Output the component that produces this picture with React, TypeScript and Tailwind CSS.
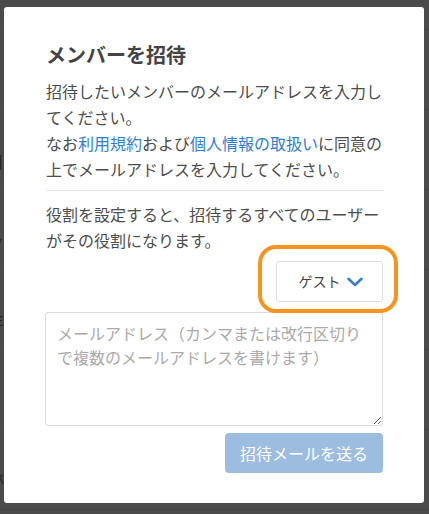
const rows = [
  { h: 'h-[30px]', text: '' },
  { h: 'h-[80px]', text: '' },
  { h: 'h-[80px]', text: '月' },
  { h: 'h-[80px]', text: '々' },
  { h: 'h-[80px]', text: '年' },
  { h: 'h-[80px]', text: '' },
  { h: 'h-[80px]', text: 'が' },
];

const InviteDialog = () => {
  return (
    <div className="absolute left-[4px] top-[7px] w-[420px] rounded-[3px] bg-white pl-[42px] pr-[40px] pt-[34px] pb-[30px]">
      <h2 className="text-[20px] font-bold leading-[28px] text-[#444]">メンバーを招待</h2>

      <p className="mt-[9px] text-[16px] leading-[26px] text-[#4d4d4d]">
        招待したいメンバーのメールアドレスを入力してください。
        <br />
        なお<a className="text-[#2f80d0]">利用規約</a>および
        <a className="text-[#2f80d0]">個人情報の取扱い</a>に同意の上でメールアドレスを入力してください。
      </p>

      <div className="mt-[8px] mr-[1px] border-t border-[#e3e3e3]" />

      <p className="mt-[10px] text-[16px] leading-[26px] text-[#4d4d4d]">
        役割を設定すると、招待するすべてのユーザーがその役割になります。
      </p>

      <div className="mt-[8px] mr-[1px] flex justify-end">
        <div className="relative">
          <button className="flex h-[41px] w-[107px] items-center justify-center gap-[6px] rounded-[3px] border border-[#dedede] bg-white pl-[2px] text-[14px] text-[#444]">
            ゲスト
            <svg width="16" height="10" viewBox="0 0 16 10" fill="none" className="mt-[1px]">
              <polyline
                points="1.5,1.8 8,8 14.5,1.8"
                stroke="#3a80c8"
                strokeWidth="2.6"
                strokeLinecap="round"
                strokeLinejoin="round"
              />
            </svg>
          </button>
          {/* annotation ring */}
          <div className="pointer-events-none absolute -left-[18px] -right-[15px] -top-[16px] -bottom-[11px] rounded-[18px] border-[4px] border-[#f7941d]" />
        </div>
      </div>

      <textarea
        className="mt-[10px] block h-[114px] w-[338px] -ml-[1px] resize-y rounded-[3px] border border-[#dcdcdc] px-[11px] pt-[8px] text-[16px] leading-[24px] text-[#444] outline-none placeholder:text-[#aaa]"
        placeholder="メールアドレス（カンマまたは改行区切りで複数のメールアドレスを書けます）"
      />

      <div className="mt-[7px] mr-[1px] flex justify-end">
        <button className="h-[40px] w-[158px] rounded-[4px] bg-[#9dbde0] text-[16px] text-white">
          招待メールを送る
        </button>
      </div>
    </div>
  );
};

export default function App() {
  return (
    <div
      className="relative h-[514px] overflow-hidden bg-[#4b4b4b]"
      style={{ fontFamily: '"Noto Sans CJK JP", "Noto Sans", sans-serif' }}
    >
      {/* page behind the overlay */}
      <div className="flex flex-col">
        {rows.map((r, i) => (
          <div key={i} className={`${r.h} flex items-center border-b border-[#444]`}>
            {r.text && (
              <span className="-ml-[12px] mt-[22px] text-[16px] text-[#262626]">{r.text}</span>
            )}
          </div>
        ))}
      </div>
      <InviteDialog />
    </div>
  );
}
